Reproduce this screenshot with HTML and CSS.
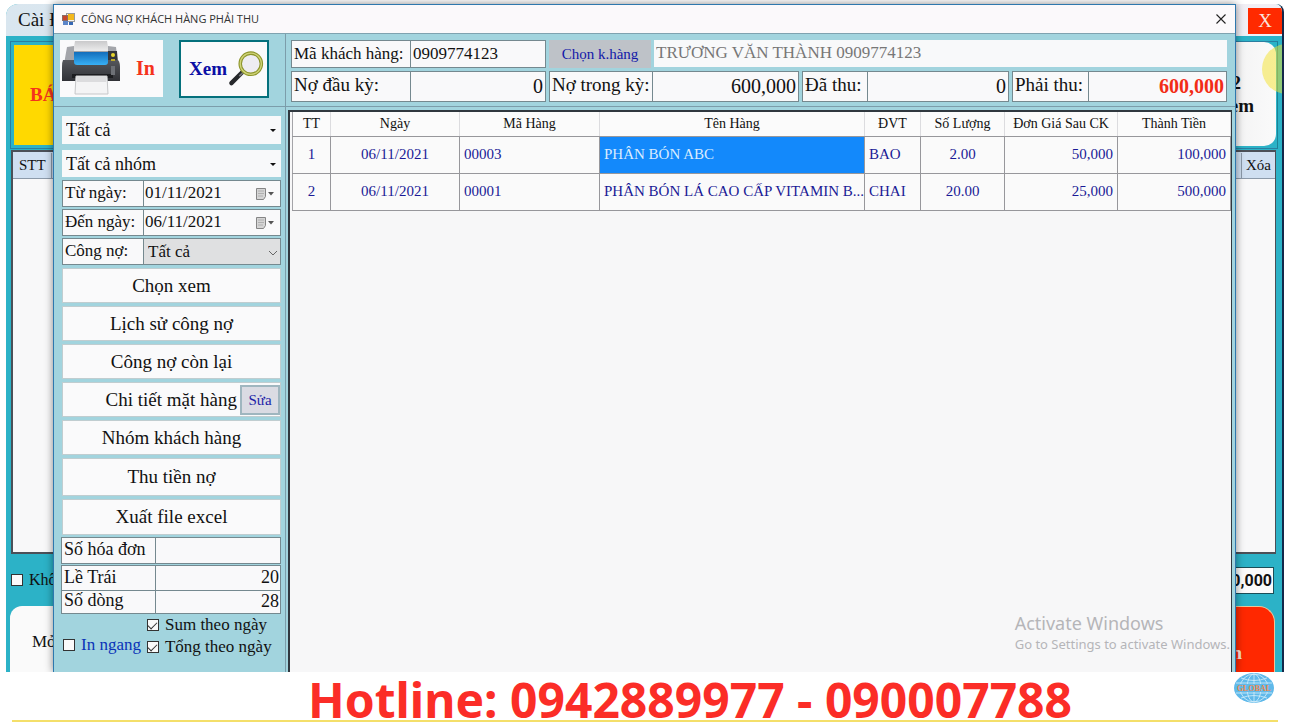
FILE: index.html
```html
<!DOCTYPE html>
<html lang="vi">
<head>
<meta charset="utf-8">
<title>Công nợ khách hàng phải thu</title>
<link rel="stylesheet" href="styles.css">
</head>
<body>
<div class="page">
  <main class="screen">
    <section class="shop">
      <header class="shop-title"><span>Cài Đ</span><button class="shop-close" type="button">X</button></header>
      <div class="shop-tiles">
        <button class="tile-sale" type="button">BÁ</button>
        <button class="tile-more" type="button"><span>2</span><span>em</span></button>
      </div>
      <div class="shop-grid">
        <div class="shop-grid-head"><span class="stt">STT</span><span class="del">Xóa</span></div>
      </div>
      <div class="shop-sum">
        <label class="check"><input type="checkbox"><span>Khô</span></label>
        <output class="total">0,000</output>
      </div>
      <div class="shop-actions">
        <button class="act-open" type="button">Mở</button>
        <button class="act-red" type="button">n</button>
      </div>
      <span class="spot"></span>
    </section>

    <section class="dialog">
      <header class="dialog-title">
        <svg class="app-icon" width="13" height="13" viewBox="0 0 13 13"><rect x="4.500" y=".5" width="8" height="8" fill="#f4f4f4" stroke="#999"/><rect x="6" y="1" width="6" height="6" fill="#f3b81c"/><rect x=".5" y="2.500" width="5" height="5" fill="#c8452b" stroke="#8d6a64"/><rect x="1" y="8" width="5" height="4" fill="#5c86c9"/><rect x="7" y="9" width="4" height="3" fill="#3868b4"/></svg>
        <h1>CÔNG NỢ KHÁCH HÀNG PHẢI THU</h1>
        <button class="dialog-close" type="button" aria-label="Đóng"><svg width="12" height="12" viewBox="0 0 12 12"><path d="M1.500 1.500l9 9M10.500 1.500l-9 9" stroke="#222" stroke-width="1.100" fill="none"/></svg></button>
      </header>
      <div class="dialog-body">
        <aside class="side">
          <div class="tools">
            <button class="tool-print" type="button">
              <svg width="60" height="57" viewBox="0 0 60 57">
                <defs>
                  <linearGradient id="body" x1="0" y1="0" x2="0" y2="1"><stop offset="0" stop-color="#55575c"/><stop offset="1" stop-color="#303136"/></linearGradient>
                  <linearGradient id="glass" x1="0" y1="0" x2="0" y2="1"><stop offset="0" stop-color="#126dbb"/><stop offset="1" stop-color="#38b0f5"/></linearGradient>
                  <linearGradient id="paper" x1="0" y1="0" x2="0" y2="1"><stop offset="0" stop-color="#c9c9cb"/><stop offset="1" stop-color="#f3f3f3"/></linearGradient>
                </defs>
                <path d="M15 1h32l2 12H13z" fill="url(#paper)"/>
                <path d="M7 7l7-1v5h34V6l8 1 2 17H4z" fill="#a3a5aa"/>
                <path d="M48 11h9l1 13H47z" fill="#34363b"/>
                <path d="M3 20h55q2 2 2 7v14H2V27q0-5 1-7z" fill="url(#body)"/>
                <path d="M14 12h34v10q0 3-3 3H17q-3 0-3-3z" fill="url(#glass)"/>
                <circle cx="53" cy="15" r="2" fill="#e7d52d"/><path d="M51 20h4" stroke="#bca82a" stroke-width="2"/>
                <path d="M12 34h41v4H12z" fill="#1c1d20"/><path d="M51 26h4v9h-4z" fill="#6d7076"/>
                <path d="M16 36h31l1 18H15z" fill="#f4f4f5" stroke="#c6c7c9"/>
                <path d="M17 37h29v5H17z" fill="#dcdcde"/>
              </svg>
              <span>In</span>
            </button>
            <button class="tool-view" type="button">
              <span>Xem</span>
              <svg width="42" height="42" viewBox="0 0 42 42">
                <path d="M17 25L5 37" stroke="#26282b" stroke-width="5" stroke-linecap="round"/><path d="M20 23l-6 6" stroke="#73767a" stroke-width="2"/>
                <circle cx="27" cy="15" r="12" fill="#eeedf2" stroke="#8d952c" stroke-width="4"/><circle cx="27" cy="15" r="12" fill="none" stroke="#d0d478" stroke-width="1.500"/>
              </svg>
            </button>
          </div>
          <form class="filters">
            <div class="combo"><select aria-label="Khách hàng"><option>Tất cả</option></select><i class="tri"></i></div>
            <div class="combo"><select aria-label="Nhóm"><option>Tất cả nhóm</option></select><i class="tri"></i></div>
            <div class="stack">
              <div class="field"><label for="from">Từ ngày:</label><input id="from" value="01/11/2021"><button class="cal" type="button" aria-label="Chọn từ ngày"><svg width="20" height="14" viewBox="0 0 20 14"><path d="M1.500 1.500h9v8l-2 3h-7z" fill="#d5d5d5" stroke="#858585"/><path d="M3 4h6M3 6.500h6M3 9h5" stroke="#b0b0b0"/><path d="M13 5h6l-3 3.500z" fill="#555"/></svg></button></div>
              <div class="field"><label for="to">Đến ngày:</label><input id="to" value="06/11/2021"><button class="cal" type="button" aria-label="Chọn đến ngày"><svg width="20" height="14" viewBox="0 0 20 14"><path d="M1.500 1.500h9v8l-2 3h-7z" fill="#d5d5d5" stroke="#858585"/><path d="M3 4h6M3 6.500h6M3 9h5" stroke="#b0b0b0"/><path d="M13 5h6l-3 3.500z" fill="#555"/></svg></button></div>
              <div class="field debt"><label for="debt">Công nợ:</label><select id="debt"><option>Tất cả</option></select><svg class="chev" width="10" height="7" viewBox="0 0 10 7"><path d="M1 1l4 4 4-4" fill="none" stroke="#666"/></svg></div>
            </div>
            <div class="commands">
              <button type="button">Chọn xem</button>
              <button type="button">Lịch sử công nợ</button>
              <button type="button">Công nợ còn lại</button>
              <div class="split"><button type="button">Chi tiết mặt hàng</button><button class="edit" type="button">Sửa</button></div>
              <button type="button">Nhóm khách hàng</button>
              <button type="button">Thu tiền nợ</button>
              <button type="button">Xuất file excel</button>
            </div>
            <div class="numbers">
              <div class="num first"><label for="inv">Số hóa đơn</label><input id="inv"></div>
              <div class="num"><label for="left">Lề Trái</label><input id="left" value="20"></div>
              <div class="num last"><label for="rows">Số dòng</label><input id="rows" value="28"></div>
            </div>
            <div class="options">
              <label class="check blue"><input type="checkbox"><span>In ngang</span></label>
              <div class="options-right">
                <label class="check"><input type="checkbox" checked><span>Sum theo ngày</span></label>
                <label class="check"><input type="checkbox" checked><span>Tổng theo ngày</span></label>
              </div>
            </div>
          </form>
        </aside>

        <div class="content">
          <form class="summary">
            <div class="sum-row">
              <div class="pair p1"><label for="code">Mã khách hàng:</label><input id="code" value="0909774123"></div>
              <button class="pick" type="button">Chọn k.hàng</button>
              <input class="customer" aria-label="Tên khách hàng" value="TRƯƠNG VĂN THÀNH 0909774123" readonly>
            </div>
            <div class="sum-row money">
              <div class="pair p1"><label for="m1">Nợ đầu kỳ:</label><input id="m1" value="0"></div>
              <div class="pair p2"><label for="m2">Nợ trong kỳ:</label><input id="m2" value="600,000"></div>
              <div class="pair p3"><label for="m3">Đã thu:</label><input id="m3" value="0"></div>
              <div class="pair p4"><label for="m4">Phải thu:</label><input id="m4" value="600,000"></div>
            </div>
          </form>
          <div class="sheet">
            <table>
              <colgroup><col class="c-tt"><col class="c-day"><col class="c-code"><col><col class="c-unit"><col class="c-qty"><col class="c-price"><col class="c-sum"></colgroup>
              <thead><tr><th>TT</th><th>Ngày</th><th>Mã Hàng</th><th>Tên Hàng</th><th>ĐVT</th><th>Số Lượng</th><th>Đơn Giá Sau CK</th><th>Thành Tiền</th></tr></thead>
              <tbody>
                <tr><td class="mid">1</td><td class="mid">06/11/2021</td><td>00003</td><td class="selected">PHÂN BÓN ABC</td><td>BAO</td><td class="mid">2.00</td><td class="num-cell">50,000</td><td class="num-cell">100,000</td></tr>
                <tr><td class="mid">2</td><td class="mid">06/11/2021</td><td>00001</td><td>PHÂN BÓN LÁ CAO CẤP VITAMIN B...</td><td>CHAI</td><td class="mid">20.00</td><td class="num-cell">25,000</td><td class="num-cell">500,000</td></tr>
              </tbody>
            </table>
            <div class="watermark"><p class="wm-big">Activate Windows</p><p class="wm-small">Go to Settings to activate Windows.</p></div>
          </div>
        </div>
      </div>
    </section>
  </main>
  <footer class="hotline">
    <p>Hotline: 0942889977 - 090007788</p>
    <svg class="globe" width="40" height="30" viewBox="0 0 40 30">
      <ellipse cx="20" cy="15" rx="20" ry="15" fill="#5fb9ea"/>
      <g fill="none" stroke="#d6effa" stroke-width=".8"><ellipse cx="20" cy="15" rx="7" ry="14"/><ellipse cx="20" cy="15" rx="14" ry="14"/><path d="M20 1v10M20 19v10M2 10h36M2 20h36M7 5q13 5 26 0M7 25q13-5 26 0"/></g>
      <rect x="5" y="11" width="30" height="8" fill="#5fb9ea"/>
      <text x="20" y="18" text-anchor="middle" class="globe-text">GLOBAL</text>
    </svg>
  </footer>
</div>
</body>
</html>
```
FILE: styles.css
```css
* { box-sizing: border-box; }
body { margin: 0; background: #fff; color: #111; font-family: "Liberation Serif", "Times New Roman", serif; }
button, input, select { font: inherit; color: inherit; margin: 0; border-radius: 0; }
button { padding: 0; border: 0; background: #fafafb; }
h1, p { margin: 0; font-weight: normal; }
.page { min-height: 100vh; display: flex; flex-direction: column; overflow: hidden; }
.screen { flex: 1; position: relative; display: flex; padding: 4px 6px 0; overflow: hidden; }

/* sales window in the background */
.shop { flex: 1; position: relative; display: flex; flex-direction: column; overflow: hidden; background: #2cb2c7; border-right: 2px solid #14284a; border-radius: 12px 8px 0 0; }
.shop-title { height: 32px; display: flex; align-items: center; justify-content: space-between; padding-left: 12px; background: linear-gradient(90deg, #d9e6ef, #f1eff5); font-size: 19px; }
.shop-close { width: 34px; height: 26px; margin-top: 2px; background: #ff2a00; color: #fbe3dc; font-size: 19px; }
.shop-tiles { height: 108px; margin: 5px 4px 0; padding: 3px; display: flex; justify-content: space-between; border: 1px solid #2b7ea0; border-right-color: #1c8396; }
.tile-sale { width: 110px; padding-left: 16px; text-align: left; background: #ffd900; color: #f5331d; font-size: 19px; font-weight: bold; }
.tile-more { width: 110px; margin: -3px -2px -1px 0; padding-right: 22px; display: flex; flex-direction: column; align-items: flex-end; justify-content: center; border-radius: 12px; background: linear-gradient(90deg, #e8e8ea, #fafafa); font-size: 19px; font-weight: bold; line-height: 23px; }
.tile-more span:first-child { margin-right: 13px; }
.shop-grid { flex: 1; margin: 1px 6px 0 5px; border: 2px solid #4b5058; border-right-width: 1px; background: #f8f8f9; }
.shop-grid-head { height: 27px; display: flex; align-items: center; justify-content: space-between; background: #cfdff1; border-bottom: 1px solid #8c9aaa; font-size: 15px; }
.stt { padding: 4px 5px 4px 6px; border-right: 1px solid #8c9aaa; }
.del { padding: 4px; border-left: 1px solid #8c9aaa; }
.shop-sum { height: 52px; display: flex; align-items: center; justify-content: space-between; padding: 0 8px 0 5px; font-size: 16px; }
.total { padding: 0 1px; border: 1px solid #1a4e58; background: #fafafa; font: bold 16px/25px Roboto, "Liberation Sans", sans-serif; }
.shop-actions { height: 66px; display: flex; justify-content: space-between; padding: 0 7px 0 4px; }
.act-open { width: 110px; padding: 6px 0 0 22px; text-align: left; border-radius: 12px 12px 0 0; background: #fafafa; font-size: 17px; }
.act-red { width: 110px; padding: 26px 32px 0 0; text-align: right; border: 1px solid #e8c79a; border-width: 1px 1px 0; border-radius: 16px 16px 0 0; background: #ff2800; color: #fce2d6; font-size: 19px; font-weight: bold; }
.spot { position: absolute; top: 40px; right: -30px; width: 50px; height: 50px; border-radius: 50%; background: #f3e12a; opacity: .5; }

/* receivables window */
.dialog { position: absolute; top: 4px; right: 54px; bottom: 0; left: 53px; display: flex; flex-direction: column; border: 1px solid #2e78ae; border-bottom: 0; background: #a2d4de; box-shadow: 0 0 8px #0007; overflow: hidden; }
.dialog-title { height: 29px; display: flex; align-items: center; gap: 6px; padding: 0 8px; border-bottom: 1px solid #7fa3b0; background: #fbf9fb; }
.dialog-title h1 { flex: 1; font: 11px/16px "Open Sans", "Noto Sans", sans-serif; color: #333; }
.dialog-close { width: 12px; height: 12px; background: none; line-height: 0; }
.dialog-body { flex: 1; display: flex; }
.side { width: 232px; border-right: 1px solid #7c9daa; }
.tools { height: 73px; display: flex; align-items: flex-start; gap: 16px; padding: 6px; border-bottom: 1px solid #7c9daa; }
.tool-print { width: 103px; height: 57px; display: flex; align-items: center; gap: 16px; color: #f5331d; font-size: 20px; font-weight: bold; }
.tool-view { width: 90px; height: 58px; display: flex; align-items: center; justify-content: space-between; padding: 0 3px 0 8px; border: 2px solid #04707c; color: #0b0fa5; font-size: 19px; font-weight: bold; }
.filters { display: flex; flex-direction: column; padding: 9px 4px 0 8px; font-size: 18px; }
.combo { position: relative; height: 28px; margin-bottom: 6px; }
.combo + .combo { height: 27px; margin-bottom: 3px; }
.combo select { width: 100%; height: 100%; padding: 0 4px; border: 0; background: #f8f9fa; appearance: none; }
.tri { position: absolute; right: 5px; top: 13px; border: 3px solid transparent; border-top-color: #111; }
.stack { display: flex; flex-direction: column; gap: 2px; font-size: 17px; }
.field { position: relative; height: 27px; display: flex; border: 1px solid #75898f; background: #f9f9fa; }
.field label { width: 81px; padding-left: 2px; border-right: 1px solid #75898f; line-height: 24px; }
.field input { flex: 1; width: 0; padding: 0 1px 2px; border: 0; background: none; }
.cal { width: 20px; margin-right: 5px; background: none; }
.cal svg { display: block; }
.debt select { flex: 1; padding: 0 4px; border: 0; background: #dfe0e1; appearance: none; }
.chev { position: absolute; right: 2px; top: 11px; }
.commands { display: grid; grid-template-rows: repeat(5, 35px) 38px 36px; gap: 3px; margin-top: 3px; }
.commands button { border: 1px solid #c0cdd0; font-size: 19px; }
.split { display: flex; background: #fafafb; border: 1px solid #c0cdd0; }
.split button { flex: 1; border: 0; text-align: right; padding-right: 3px; }
.split .edit { flex: none; width: 40px; margin: 2px 0 1px; padding: 0; border: 2px solid #9fb6bf; background: #dadbe3; color: #1d1fa8; text-align: center; font-size: 15px; }
.numbers { margin: 2px 0 0 -1px; }
.num { height: 26px; display: flex; border: 1px solid #75898f; background: #f9f9fa; }
.num.first { height: 27px; margin-bottom: 1px; }
.num.last { height: 23px; border-top: 0; }
.num label { width: 94px; padding-left: 2px; border-right: 1px solid #75898f; line-height: 22px; }
.num.last label { line-height: 18px; }
.num input { flex: 1; width: 0; padding: 0 1px 2px; border: 0; background: none; text-align: right; }
.options { display: flex; align-items: flex-end; gap: 6px; padding-left: 1px; font-size: 17px; }
.options-right { display: flex; flex-direction: column; }
.check { display: flex; align-items: center; gap: 6px; line-height: 22px; white-space: nowrap; }
.check input { appearance: none; width: 12px; height: 12px; flex: none; border: 1px solid #333; background: #fafafa; display: grid; place-items: center; }
.check input:checked::after { content: ""; width: 8px; height: 4px; border: solid #333; border-width: 0 0 1px 1px; transform: rotate(-45deg); margin-bottom: 2px; }
.blue { color: #0a33b8; line-height: 26px; }

.content { flex: 1; min-width: 0; display: flex; flex-direction: column; }
.summary { height: 73px; display: flex; flex-direction: column; gap: 3px; padding: 6px 8px 4px 5px; border-bottom: 1px solid #7c9daa; font-size: 17px; }
.sum-row { display: flex; gap: 3px; height: 28px; }
.money { height: 31px; font-size: 19px; }
.pair { display: flex; border: 1px solid #75898f; background: #f9f9fa; }
.pair label { flex: none; padding-left: 2px; border-right: 1px solid #75898f; line-height: 25px; white-space: nowrap; }
.pair input { flex: 1; width: 0; padding: 0 2px 1px; border: 0; background: none; }
.money input { text-align: right; font-size: 20px; }
.p1 { width: 255px; }
.p1 label { width: 119px; }
.p2 { width: 250px; }
.p2 label { width: 103px; }
.p3 { width: 207px; }
.p3 label { width: 65px; }
.p4 { flex: 1; }
.p4 label { width: 76px; }
.p4 input { color: #f22c16; font-weight: bold; }
.pick { width: 102px; background: #bec2c8; color: #1218a8; font-size: 15px; }
.customer { flex: 1; min-width: 0; padding: 0 2px 1px; border: 0; background: #f8f9fa; color: #777; margin-bottom: 1px; }
.sheet { flex: 1; position: relative; margin: 3px 3px 0 2px; padding-left: 2px; border: 2px solid #30383f; border-width: 2px 1px 0 2px; background: #f7f7f8; }
table { width: 100%; table-layout: fixed; border-collapse: collapse; font-size: 15px; border-left: 1px solid #a4a4a8; }
.c-tt { width: 38px; } .c-day { width: 129px; } .c-code { width: 140px; } .c-unit { width: 56px; } .c-qty { width: 84px; } .c-price { width: 113px; } .c-sum { width: 113px; }
th { height: 24px; padding: 0; border-right: 1px solid #dcdcdf; border-bottom: 1px solid #97979b; font-size: 14px; font-weight: normal; background: #fbfbfb; }
td { height: 37px; padding: 0 4px; border-right: 1px solid #97979b; border-bottom: 1px solid #97979b; background: #fafafa; color: #1a1a96; white-space: nowrap; }
.mid { text-align: center; }
.num-cell { text-align: right; }
.selected { background: #1389fb; color: #d9ecff; }
.watermark { position: absolute; right: 1px; bottom: 18px; color: #b5b5b8; font-family: "Noto Sans", sans-serif; white-space: nowrap; }
.wm-big { font-size: 18px; line-height: 22px; }
.wm-small { font-size: 13px; line-height: 20px; }

.hotline { position: relative; height: 54px; padding: 0 12px; border-bottom: 4px solid #fff; }
.hotline::after { content: ""; position: absolute; right: 12px; bottom: 0; left: 12px; height: 2px; background: #f4df6a; }
.hotline p { margin-left: 296px; font: bold 48px/56px "Noto Sans", "Open Sans", sans-serif; color: #fb2d27; white-space: nowrap; }
.globe { position: absolute; top: 1px; right: 16px; }
.globe-text { font: bold 8px "Liberation Serif", serif; fill: #f08a4c; }
```
